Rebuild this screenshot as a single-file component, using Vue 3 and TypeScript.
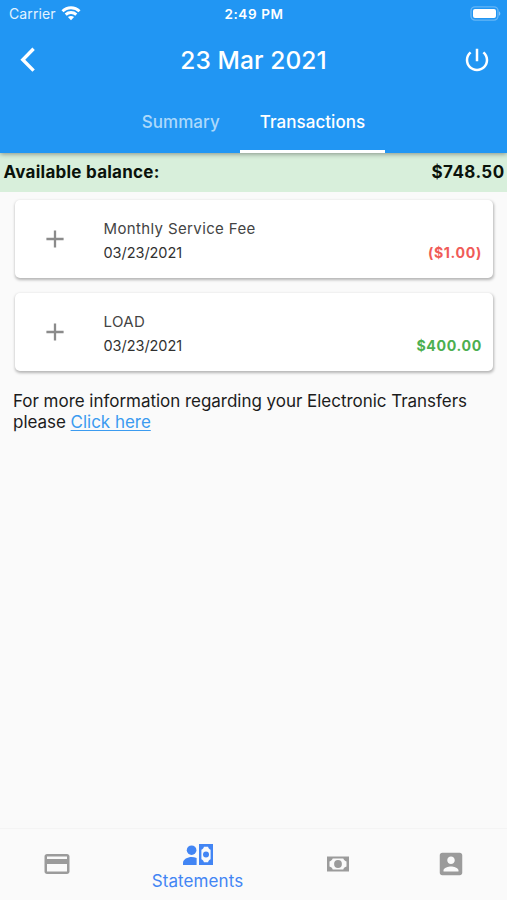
<script setup lang="ts">
interface Transaction {
  name: string
  date: string
  amount: string
  kind: 'debit' | 'credit'
}

const transactions: Transaction[] = [
  { name: 'Monthly Service Fee', date: '03/23/2021', amount: '($1.00)', kind: 'debit' },
  { name: 'LOAD', date: '03/23/2021', amount: '$400.00', kind: 'credit' },
]
</script>

<template>
  <div class="screen">
    <header class="header">
      <div class="status">
        <div class="carrier">
          <span>Carrier</span>
          <svg width="20" height="15" viewBox="0 0 20 15" fill="none" stroke="#fff" stroke-width="2.9">
            <path d="M1.5 5.2C6.2.5 13.8.5 18.5 5.2" />
            <path d="M4.7 8.6c3-2.8 7.6-2.8 10.6 0" />
            <path d="M10 14.2 6.9 11.1c1.7-1.5 4.5-1.5 6.2 0z" fill="#fff" stroke="none" />
          </svg>
        </div>
        <span class="clock">2:49 PM</span>
        <div class="battery-slot">
          <svg width="31" height="15" viewBox="0 0 31 15">
            <rect x="1" y=".9" width="27" height="13.2" rx="4" fill="none" stroke="#fff" stroke-opacity=".3" stroke-width="1.4" />
            <rect x="3" y="2.9" width="23" height="9.2" rx="2" fill="#fff" />
            <path d="M29 5.2c1.8.8 1.8 3.8 0 4.6z" fill="#fff" fill-opacity=".45" />
          </svg>
        </div>
      </div>
      <div class="toolbar">
        <svg class="back" width="16" height="26" viewBox="0 0 16 26" fill="none" stroke="#fff" stroke-width="3.4">
          <path d="M13.6 1.8 2.8 12.7l10.8 10.9" />
        </svg>
        <h1>23 Mar 2021</h1>
        <svg class="power" width="30" height="30" viewBox="0 0 24 24" fill="#fff">
          <path d="M13 3h-2v10h2V3zm4.83 2.17-1.42 1.42C17.99 7.86 19 9.81 19 12c0 3.87-3.13 7-7 7s-7-3.13-7-7c0-2.19 1.01-4.14 2.58-5.42L6.17 5.17C4.23 6.82 3 9.26 3 12c0 4.97 4.03 9 9 9s9-4.03 9-9c0-2.74-1.23-5.18-3.17-6.83z" />
        </svg>
      </div>
      <nav class="tabs">
        <span class="tab summary"><span>Summary</span></span>
        <span class="tab active"><span>Transactions</span></span>
      </nav>
    </header>

    <section class="balance">
      <span class="balance-label">Available balance:</span>
      <span class="balance-value">$748.50</span>
    </section>

    <main class="content">
      <article v-for="item in transactions" :key="item.name" class="card">
        <svg class="plus" width="18" height="18" viewBox="0 0 18 18" stroke="#8b8b8b" stroke-width="2.3">
          <path d="M9 .4v17.2M.4 9h17.2" />
        </svg>
        <div class="details">
          <span class="name">{{ item.name }}</span>
          <span class="date">{{ item.date }}</span>
        </div>
        <span class="amount" :class="item.kind">{{ item.amount }}</span>
      </article>
      <p class="info">
        For more information regarding your Electronic Transfers<br />
        please <a class="link">Click here</a>
      </p>
    </main>

    <footer class="bottom-nav">
      <div class="nav-item">
        <svg width="30" height="30" viewBox="0 0 24 24" fill="#9b9b9b">
          <path d="M20 4H4c-1.11 0-1.99.89-1.99 2L2 18c0 1.11.89 2 2 2h16c1.11 0 2-.89 2-2V6c0-1.11-.89-2-2-2zm0 14H4v-6h16v6zm0-10H4V6h16v2z" />
        </svg>
      </div>
      <div class="nav-item selected">
        <svg width="30" height="22" viewBox="0 0 30 22" fill="#4285f4">
          <circle cx="8.6" cy="6.2" r="4.8" />
          <path d="M0 21v-2.4c0-3.4 4.6-5.7 8.6-5.7 1.6 0 3.5.4 5 1.1V21z" />
          <path fill-rule="evenodd" d="M16 0h14v21H16zM20.9 2.7c-.2 1.4-1.1 2.5-2.5 3v9.6c1.4.5 2.3 1.6 2.5 3h4.2c.2-1.4 1.1-2.5 2.5-3V5.7c-1.4-.5-2.3-1.6-2.5-3z" />
          <circle cx="23" cy="10.5" r="3" />
        </svg>
        <span>Statements</span>
      </div>
      <div class="nav-item">
        <svg width="22" height="16" viewBox="0 0 22 16" fill="#9b9b9b">
          <path fill-rule="evenodd" d="M0 .5h22v15H0zM5.7 2.6C5.2 4.1 4.1 5.1 2.5 5.5v5c1.6.4 2.7 1.4 3.2 2.9h10.6c.5-1.5 1.6-2.5 3.2-2.9v-5c-1.6-.4-2.7-1.4-3.2-2.9z" />
          <circle cx="11" cy="8" r="3.9" />
        </svg>
      </div>
      <div class="nav-item">
        <svg width="30" height="30" viewBox="0 0 24 24" fill="#9b9b9b">
          <path d="M3 5v14c0 1.1.89 2 2 2h14c1.1 0 2-.9 2-2V5c0-1.1-.9-2-2-2H5c-1.11 0-2 .9-2 2zm12 4c0 1.66-1.34 3-3 3s-3-1.34-3-3 1.34-3 3-3 3 1.34 3 3zm-9 8c0-2 4-3.1 6-3.1s6 1.1 6 3.1v1H6v-1z" />
        </svg>
      </div>
    </footer>
  </div>
</template>

<style>
body {
  margin: 0;
}
</style>

<style scoped>
.screen {
  box-sizing: border-box;
  display: flex;
  flex-direction: column;
  width: 507px;
  height: 900px;
  overflow: hidden;
  background: #fafafa;
  color: #1c1c1c;
  font-family: Inter, "Liberation Sans", sans-serif;
  white-space: nowrap;
}

.header {
  position: relative;
  z-index: 1;
  display: flex;
  flex-direction: column;
  flex: none;
  height: 152.5px;
  background: #2196f3;
  color: #fff;
  box-shadow: 0 1px 5px rgba(0, 0, 0, 0.4);
}

.status {
  display: grid;
  grid-template-columns: 1fr auto 1fr;
  align-items: center;
  height: 27px;
  padding: 0 6px 0 9px;
}

.carrier {
  display: flex;
  align-items: center;
  gap: 5px;
  font-size: 14px;
  letter-spacing: 0.1px;
  color: #e3f3ff;
}

.clock {
  margin-right: 2px;
  font-size: 13.5px;
  font-weight: 600;
  letter-spacing: 0.6px;
}

.battery-slot {
  display: flex;
  justify-content: flex-end;
}

.toolbar {
  display: grid;
  grid-template-columns: 60px 1fr 60px;
  align-items: center;
  height: 66px;
}

.back {
  margin-left: 20px;
}

.power {
  justify-self: end;
  margin: -1px 15px 0 0;
}

h1 {
  margin: 0;
  font-size: 24.5px;
  line-height: 30px;
  font-weight: 500;
  letter-spacing: 0.1px;
  text-align: center;
}

.tabs {
  display: flex;
  justify-content: center;
  flex: 1;
}

.tab {
  display: flex;
  align-items: center;
  box-sizing: border-box;
  padding: 2px 20px 0;
  border-bottom: 3px solid transparent;
  font-size: 17px;
  font-weight: 500;
  letter-spacing: 0.05px;
}

.summary {
  color: #add9fb;
}

.active {
  border-bottom-color: #fff;
}

.balance {
  display: flex;
  align-items: center;
  justify-content: space-between;
  flex: none;
  height: 39.5px;
  box-sizing: border-box;
  padding: 0 2.5px 0 3.5px;
  background: #d8efdb;
  color: #0a120b;
  font-size: 17px;
  font-weight: 700;
}

.balance-label {
  letter-spacing: 0.25px;
}

.balance-value {
  letter-spacing: 0.4px;
}

.content {
  display: flex;
  flex-direction: column;
  flex: 1;
  gap: 15px;
  padding: 8px 14px 0 15px;
}

.card {
  display: flex;
  flex: none;
  height: 78px;
  box-sizing: border-box;
  padding: 18px 11px 0 31px;
  border-radius: 5px;
  background: #fff;
  box-shadow: 0.5px 1.5px 3px rgba(0, 0, 0, 0.28);
}

.plus {
  margin-top: 12px;
}

.details {
  display: flex;
  flex-direction: column;
  flex: 1;
  margin-left: 39.5px;
}

.name,
.date,
.amount {
  font-size: 15px;
  line-height: 22px;
}

.name {
  color: #444;
  letter-spacing: 0.37px;
}

.date {
  margin-top: 2px;
  color: #303030;
  font-size: 14.5px;
  letter-spacing: -0.05px;
}

.amount {
  align-self: flex-start;
  margin-top: 24px;
  font-size: 14.2px;
  font-weight: 700;
  letter-spacing: 0.65px;
}

.amount.debit {
  color: #f05b58;
}

.amount.credit {
  color: #4caf50;
}

.info {
  margin: 5px 0 0 -2px;
  font-size: 17px;
  line-height: 21px;
  letter-spacing: -0.03px;
}

.link {
  color: #3b9bf0;
  text-decoration: underline;
  text-decoration-thickness: 1px;
  text-underline-offset: 2px;
}

.bottom-nav {
  display: grid;
  grid-template-columns: 113px 168px 113px 113px;
  flex: none;
  height: 72px;
  box-sizing: border-box;
  border-top: 1px solid #f4f4f4;
}

.nav-item {
  display: flex;
  flex-direction: column;
  align-items: center;
  justify-content: center;
  padding-bottom: 2px;
}

.selected {
  justify-content: flex-start;
  padding: 15px 0 0 1px;
  color: #4285f4;
  font-size: 17px;
  line-height: 21px;
  letter-spacing: 0.1px;
}

.selected span {
  margin-top: 5px;
}
</style>
